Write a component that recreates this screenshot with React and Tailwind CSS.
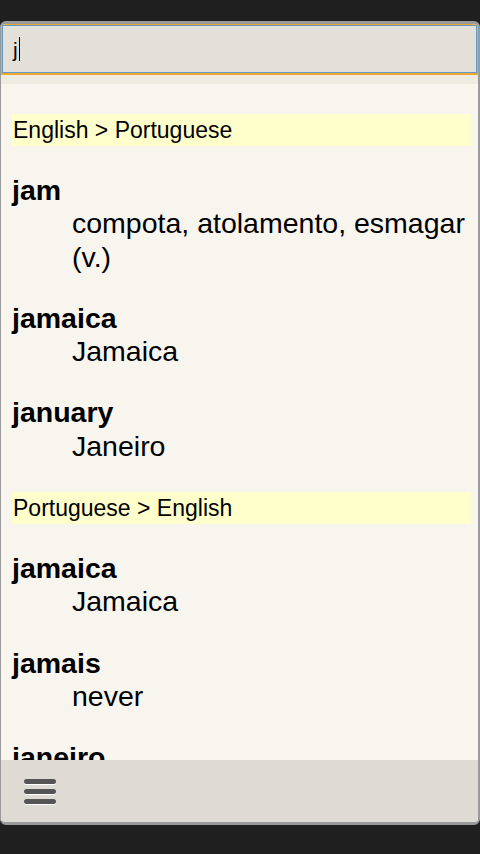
import React from 'react'

const sections = [
  {
    title: 'English > Portuguese',
    entries: [
      { word: 'jam', def: 'compota, atolamento, esmagar (v.)' },
      { word: 'jamaica', def: 'Jamaica' },
      { word: 'january', def: 'Janeiro' },
    ],
  },
  {
    title: 'Portuguese > English',
    entries: [
      { word: 'jamaica', def: 'Jamaica' },
      { word: 'jamais', def: 'never' },
      { word: 'janeiro', def: 'January' },
    ],
  },
]

const Menu = () => (
  <div className="flex flex-col gap-[5px] w-[32px]">
    {[0, 1, 2].map(i => (
      <div key={i} className="h-[5px] rounded-full bg-[#555555] shadow-[0_1px_0_#ffffff]" />
    ))}
  </div>
)

export default function App() {
  return (
    <div className="w-[480px] h-[854px] bg-[#1f1f1f] pt-[21px] overflow-hidden" style={{ fontFamily: '"Liberation Sans", Arial, sans-serif' }}>
      <div className="h-[804px] flex flex-col rounded-[6px] overflow-hidden border-t-[3px] border-l-[1px] border-r-[2px] border-b-[3px] border-[#9a9a9a] bg-[#f8f5ef]">
        <div className="h-[51px] bg-[#f0a830] p-[1px] pb-[2px] shrink-0">
          <div className="h-full border border-[#5d9cc8] bg-[#e2e0d9] flex items-center pl-[10px]">
            <span className="text-[21px] text-black leading-none">j</span>
            <span className="w-[1px] h-[24px] bg-black ml-[1px]" />
          </div>
        </div>
        <div className="h-[9px] bg-[#eeebe3] shrink-0" />
        <div className="flex-1 overflow-hidden pl-[11px] pr-[7px]">
          {sections.map((s, si) => (
            <div key={si}>
              <div className={`${si === 0 ? 'mt-[30px]' : 'mt-[29px]'} h-[32px] bg-[#ffffcc] pl-[1px] flex items-center text-[23px] text-black`}>
                {s.title}
              </div>
              {s.entries.map((e, i) => (
                <div key={i} className="mt-[28px] text-[28.5px] leading-[33.3px] text-black">
                  <div className="font-bold">{e.word}</div>
                  <div className="pl-[60px]">{e.def}</div>
                </div>
              ))}
            </div>
          ))}
        </div>
        <div className="h-[62px] bg-[#dedbd4] shrink-0 flex items-center pl-[23px]">
          <Menu />
        </div>
      </div>
    </div>
  )
}
